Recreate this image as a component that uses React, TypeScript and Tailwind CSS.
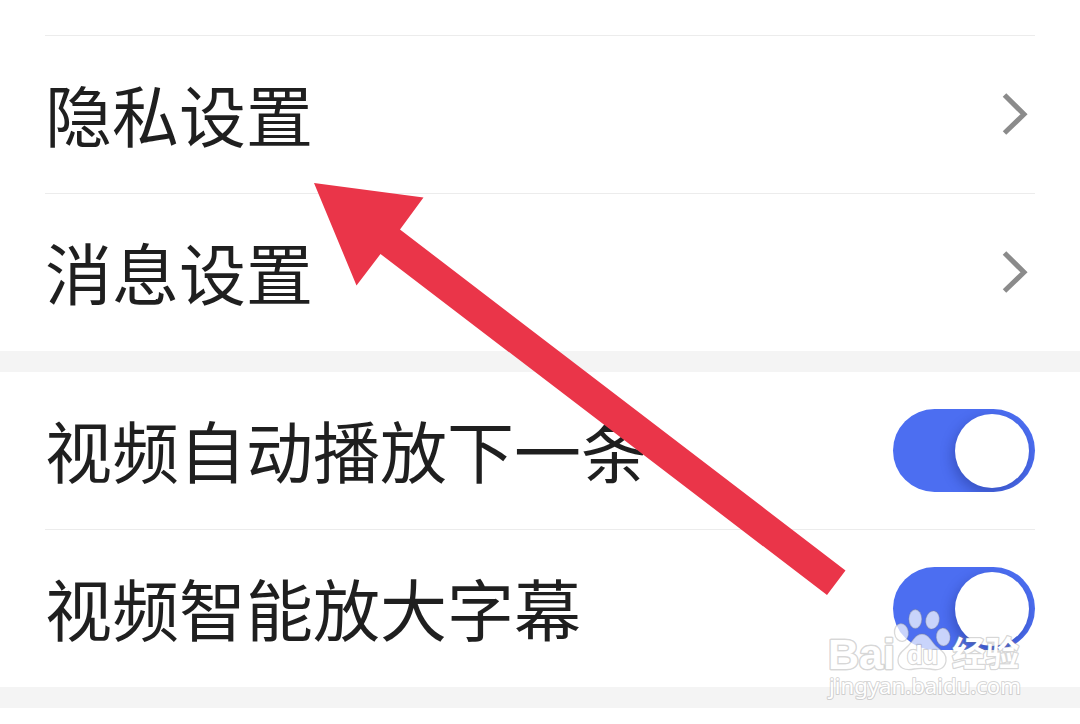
import type { ReactNode } from 'react';

function Chevron() {
  return (
    <svg className="mr-[6px] -mt-px h-[48px] w-[30px]" viewBox="0 0 30 48" fill="none">
      <path d="M5.5 5 L25 24.3 L5.5 43" stroke="#8b8b8b" strokeWidth="5" />
    </svg>
  );
}

function Toggle() {
  return (
    <button
      role="switch"
      aria-checked="true"
      className="flex h-[83px] w-[142px] items-center justify-end overflow-hidden rounded-full bg-[#4c6ef1] pr-[6px]"
    >
      <span className="size-[74px] rounded-full bg-white shadow-[-2px_5px_12px_1px_rgba(25,40,120,0.36)]" />
    </button>
  );
}

function Row({ label, divider, children }: { label: string; divider?: boolean; children: ReactNode }) {
  return (
    <div className="px-[45px]">
      <div
        className={
          divider
            ? 'flex h-[158px] items-center justify-between border-b border-[#ececec]'
            : 'flex h-[157px] items-center justify-between'
        }
      >
        <span className="whitespace-nowrap pb-[4px] text-[67px] leading-none text-[#1f1f1f]">{label}</span>
        {children}
      </div>
    </div>
  );
}

function Arrow() {
  return (
    <svg className="pointer-events-none absolute left-0 top-0 h-[724px] w-[1080px]" viewBox="0 0 1080 724">
      <polygon points="314,183 423.500,197.500 400,229.500 845.500,570.500 827,595 380.500,254 356.500,285.500" fill="#ea3549" />
    </svg>
  );
}

function Watermark() {
  return (
    <svg
      className="pointer-events-none absolute left-[820px] top-[600px] h-[110px] w-[220px]"
      viewBox="820 600 220 110"
    >
      <g fill="#ffffff" fillOpacity="0.7" stroke="#808080" strokeOpacity="0.3" strokeWidth="1.3">
        <ellipse cx="901.5" cy="632.5" rx="7" ry="9" transform="rotate(-8 901.5 632.5)" />
        <ellipse cx="915.3" cy="619" rx="6.500" ry="9.500" />
        <ellipse cx="932.5" cy="620" rx="6.800" ry="9.200" transform="rotate(12 932.5 620)" />
        <ellipse cx="943.2" cy="637" rx="7" ry="9" transform="rotate(-5 943.2 637)" />
        <path d="M922 634 C929 634 931 641 936 646 C942 651 947 654 946 661 C945 669 938 671 930 669 C924 668 920 668 914 669 C905 671 898 668 898 660 C898 653 904 650 908 646 C913 641 915 634 922 634 Z" />
      </g>
      <g fill="#ffffff" stroke="#808080" strokeOpacity="0.32" paintOrder="stroke" strokeLinejoin="round">
        <text x="828" y="669" fontSize="43" fontWeight="700" strokeWidth="3" textLength="67" lengthAdjust="spacingAndGlyphs" className="font-['Liberation_Sans',sans-serif]">
          Bai
        </text>
        <text x="907" y="664" fontSize="26" fontWeight="700" strokeWidth="2.4" textLength="31" lengthAdjust="spacingAndGlyphs" className="font-['Liberation_Sans',sans-serif]">
          du
        </text>
        <text x="952" y="666" fontSize="34" fontWeight="700" strokeWidth="2.6" textLength="67" lengthAdjust="spacingAndGlyphs" className="font-['Noto_Sans_CJK_SC',sans-serif]">
          经验
        </text>
        <text x="829" y="694" fontSize="21" strokeWidth="2" textLength="192" lengthAdjust="spacingAndGlyphs" className="font-['Noto_Sans',sans-serif]">
          jingyan.baidu.com
        </text>
      </g>
    </svg>
  );
}

export default function App() {
  return (
    <main className="relative h-[724px] w-[1080px] overflow-hidden bg-white font-['Noto_Sans_CJK_SC',sans-serif]">
      <div className="mx-[45px] h-[36px] border-b border-[#ececec]" />
      <Row label="隐私设置" divider>
        <Chevron />
      </Row>
      <Row label="消息设置">
        <Chevron />
      </Row>
      <div className="h-[21px] bg-[#f4f4f4]" />
      <Row label="视频自动播放下一条" divider>
        <Toggle />
      </Row>
      <Row label="视频智能放大字幕">
        <Toggle />
      </Row>
      <div className="h-[21px] bg-[#f4f4f4]" />
      <Arrow />
      <Watermark />
    </main>
  );
}
